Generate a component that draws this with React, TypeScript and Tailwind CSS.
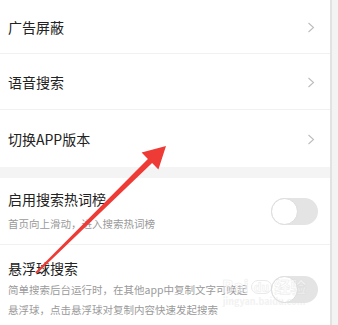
import React from 'react';

const font = { fontFamily: '"Noto Sans CJK SC", "Noto Sans", sans-serif' };

const Chevron = () => (
  <svg width="8" height="11" viewBox="0 0 8 11" fill="none" className="shrink-0">
    <path d="M1.5 1 L6.5 5.5 L1.5 10" stroke="#bdbdbd" strokeWidth="1.1" />
  </svg>
);

const Toggle = () => (
  <div className="relative w-[47px] h-[27px] rounded-full bg-[#e4e4e4] shrink-0">
    <div className="absolute left-0 top-0 w-[27px] h-[27px] rounded-full bg-white border border-[#dcdcdc]" />
  </div>
);

const LinkRow = ({ label, h, border = true }: { label: string; h: string; border?: boolean }) => (
  <div
    className={`shrink-0 flex items-center justify-between pl-2 pr-[15px] pt-[2px] ${h} ${border ? 'border-b border-[#f1f1f1]' : ''}`}
  >
    <span className="text-[14px] text-[#222]">{label}</span>
    <Chevron />
  </div>
);

export default function App() {
  return (
    <div className="relative w-[338px] h-[325px] overflow-hidden bg-[#f3f3f3] flex" style={font}>
      <div className="w-[330px] shrink-0 bg-white flex flex-col">
        <LinkRow label="广告屏蔽" h="h-[54px]" />
        <LinkRow label="语音搜索" h="h-[56px]" />
        <LinkRow label="切换APP版本" h="h-[57px]" border={false} />
        <div className="shrink-0 h-[11px] bg-[#f4f4f4]" />

        <div className="shrink-0 flex items-center justify-between pl-2 pr-[12px] pt-[11px] pb-[10px] border-b border-[#f1f1f1]">
          <div className="flex flex-col">
            <span className="text-[14px] leading-[20px] text-[#222]">启用搜索热词榜</span>
            <span className="mt-[5px] text-[10.5px] leading-[20px] text-[#9a9a9a]">首页向上滑动，进入搜索热词榜</span>
          </div>
          <Toggle />
        </div>

        <div className="shrink-0 flex items-center justify-between pl-2 pr-[12px] pt-[13px] pb-[10px]">
          <div className="flex flex-col w-[240px]">
            <span className="text-[14px] leading-[20px] text-[#222]">悬浮球搜索</span>
            <span className="mt-[2px] text-[10.5px] leading-[20px] text-[#9a9a9a]">
              简单搜索后台运行时，在其他app中复制文字可唤起悬浮球，点击悬浮球对复制内容快速发起搜索
            </span>
          </div>
          <Toggle />
        </div>
      </div>
      <div className="w-[2px] shrink-0 bg-[#e2e2e2]" />
      <div className="flex-1 bg-[#f3f3f3]" />

      {/* watermark */}
      <div className="absolute left-[222px] top-[277px] flex flex-col items-center pointer-events-none opacity-50">
        <div className="flex items-end gap-[2px] text-[17px] font-bold leading-none text-white" style={{ WebkitTextStroke: '0.5px #d6d6d6' }}>
          <span>Bai</span>
          <span className="rounded-full border border-[#d6d6d6] px-[2px] text-[12px]">du</span>
          <span className="text-[16px]">经验</span>
        </div>
        <span className="mt-[3px] text-[9px] leading-none text-[#e6e6e6] font-bold">jingyan.baidu.com</span>
      </div>

      {/* red arrow */}
      <svg className="absolute left-0 top-0 pointer-events-none" width="338" height="325" viewBox="0 0 338 325">
        <polygon
          points="35.3,272.3 147.9,158.9 141.6,152.4 166,146 158.4,169.6 152.1,163.1 36.7,273.7"
          fill="#ee3b36"
        />
      </svg>
    </div>
  );
}
